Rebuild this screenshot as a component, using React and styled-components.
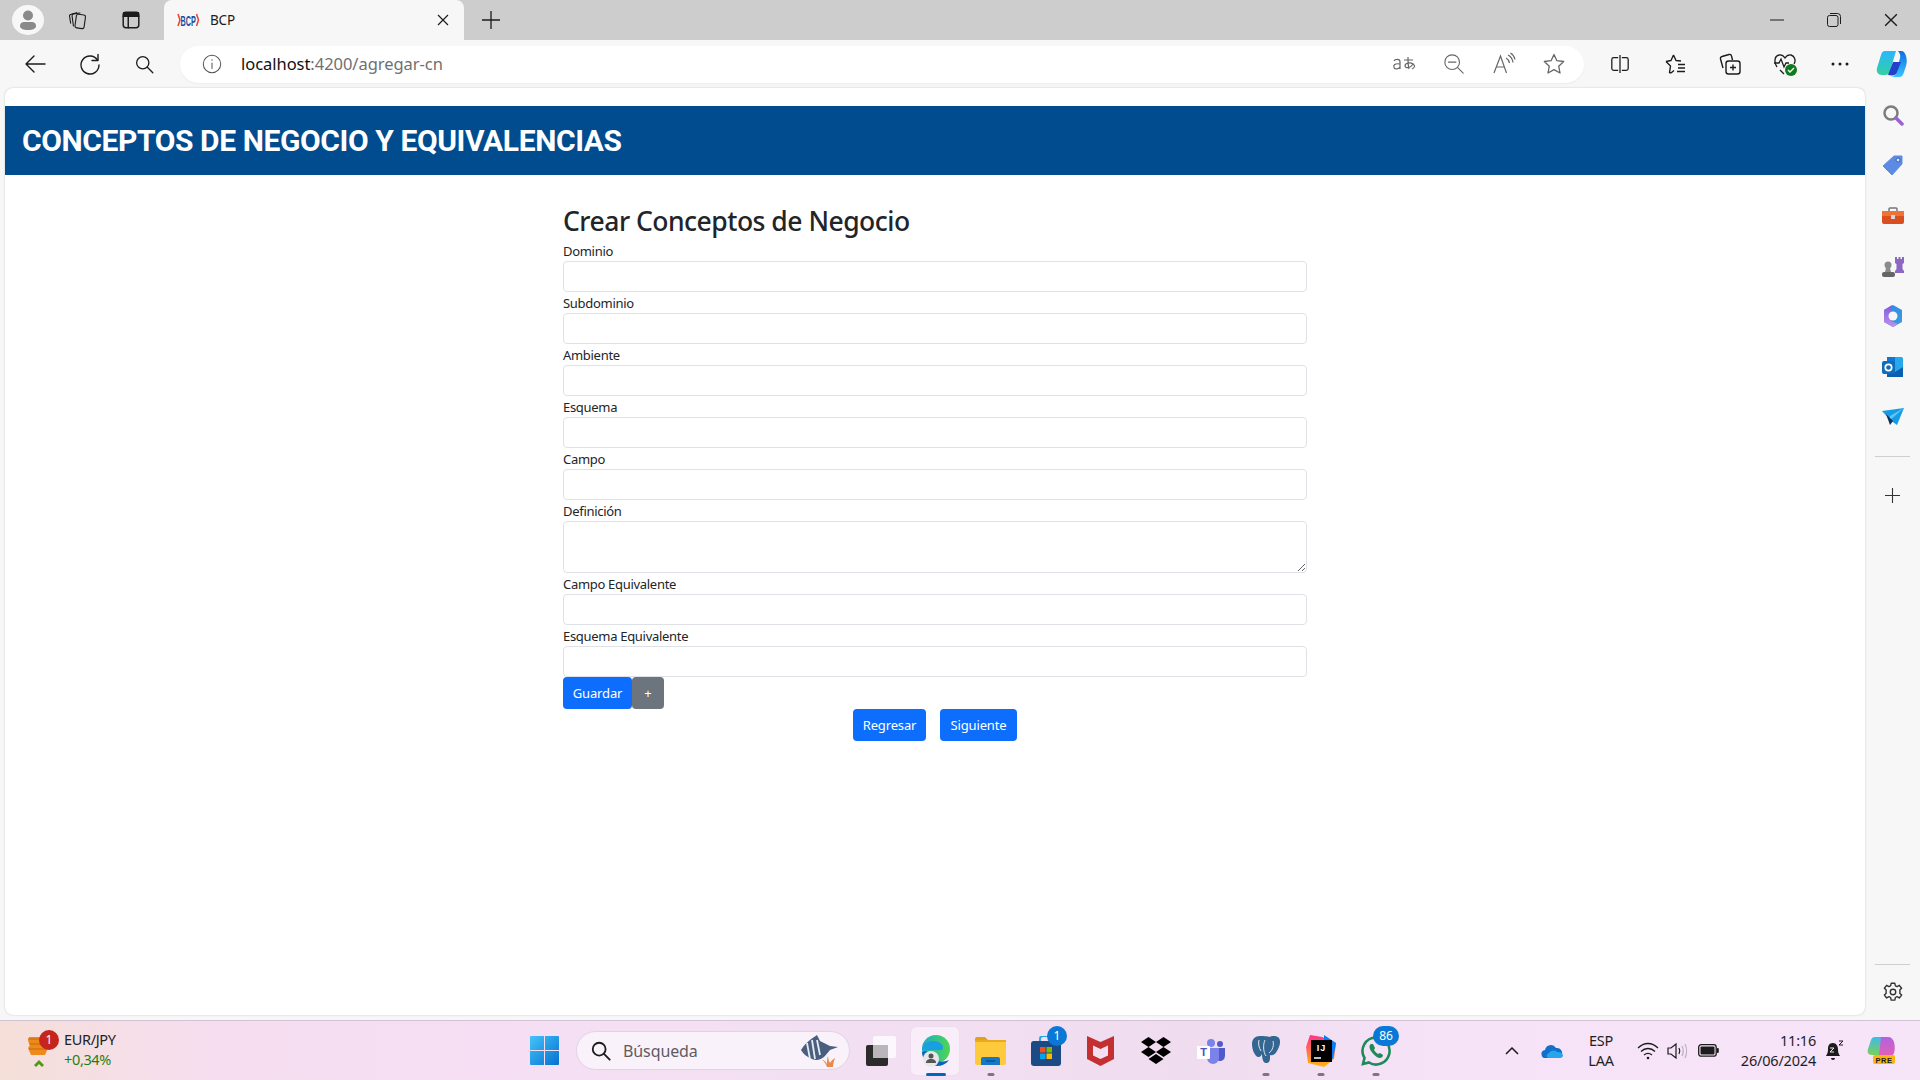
import React from "react";
import styled, { createGlobalStyle } from "styled-components";

const Global = createGlobalStyle`
  html, body { margin: 0; padding: 0; height: 1080px; overflow: hidden; background: #f7f7f7; }
  * { box-sizing: border-box; }
  body { font-family: "Noto Sans", "Open Sans", sans-serif; color: #212529; }
`;

const Shell = styled.div`display:flex;flex-direction:column;width:1920px;height:1080px;`;
const TabStrip = styled.div`display:flex;align-items:center;height:40px;background:#cdcdcd;padding-left:0;`;
const Slot = styled.div`
  flex:none;display:flex;align-items:center;justify-content:center;position:relative;
  width:${p=>p.$w||40}px;height:${p=>p.$h||40}px;margin-left:${p=>p.$ml||0}px;
`;
const ProfileDisc = styled.div`width:32px;height:30px;border-radius:50%;background:#f7f7f7;display:flex;align-items:center;justify-content:center;`;
const Tab = styled.div`
  flex:none;width:300px;height:40px;margin-left:9px;background:#f7f7f7;border-radius:8px 8px 0 0;
  display:flex;align-items:center;padding:0 15px 0 12px;font-size:13.5px;color:#1c1c1c;
`;
const TabTitle = styled.span`margin-left:10px;flex:1;letter-spacing:-.2px;`;
const WindowControls = styled.div`display:flex;margin-left:auto;margin-right:1px;`;
const Toolbar = styled.div`display:flex;align-items:center;height:48px;background:#f7f7f7;padding-left:7px;`;
const AddressBar = styled.div`
  flex:none;width:1404px;height:37px;margin-left:8px;background:#fff;border-radius:19px;
  display:flex;align-items:center;padding-left:21px;padding-right:5px;box-shadow:0 1px 2px rgba(0,0,0,.05);
`;
const Url = styled.div`margin:0 0 2px 18px;flex:1;font-size:16.5px;letter-spacing:-.04px;color:#111;`;
const UrlRest = styled.span`color:#707070;`;
const Middle = styled.div`flex:1;display:flex;min-height:0;`;
const Page = styled.main`
  flex:none;width:1860px;margin:0 0 5px 5px;background:#fff;border-radius:8px;padding-top:18px;
  box-shadow:0 0 2px rgba(0,0,0,.22);
`;
const Banner = styled.header`height:69px;background:#004c8f;display:flex;align-items:center;padding:1px 0 0 17px;`;
const BannerTitle = styled.h1`margin:0;font:700 30px/1 Roboto,sans-serif;letter-spacing:-.4px;color:#fff;`;
const Form = styled.form`width:744px;margin:29px auto 0;display:flex;flex-direction:column;`;
const FormTitle = styled.h3`margin:0;padding-bottom:2px;font-size:26.5px;line-height:34px;font-weight:500;letter-spacing:-.5px;color:#212529;`;
const Label = styled.label`display:block;height:21px;font-size:13px;line-height:${p=>p.$lh||23}px;letter-spacing:-.3px;color:#212529;`;
const TextInput = styled.input`display:block;width:100%;height:31px;border:1px solid #dee2e6;border-radius:4px;background:#fff;padding:0;margin:0;outline:none;`;
const TextArea = styled.textarea`display:block;width:100%;height:52px;border:1px solid #dee2e6;border-radius:4px;background:#fff;padding:0;margin:0;outline:none;resize:vertical;`;
const Button = styled.button`
  height:32px;border:0;border-radius:4px;color:#fff;font:400 13px/1 "Noto Sans",sans-serif;letter-spacing:-.15px;padding:0;
  width:${p=>p.$w}px;background:${p=>p.$gray?"#6c757d":"#0d6efd"};
`;
const Actions = styled.div`display:flex;`;
const Nav = styled.div`display:flex;justify-content:center;gap:14px;`;
const SideBar = styled.aside`flex:1;display:flex;flex-direction:column;align-items:center;padding:2px 0 3px 0;`;
const SideIcon = styled.div`width:50px;height:50.3px;display:flex;align-items:center;justify-content:center;flex:none;`;
const SideRule = styled.div`width:35px;height:1px;background:#cfcfcf;flex:none;margin:${p=>p.$m||"14px 0 13px"};`;
const Spacer = styled.div`flex:1;`;
const Taskbar = styled.footer`
  height:60px;flex:none;border-top:1px solid #d3c2d4;display:flex;align-items:center;position:relative;
  background:linear-gradient(90deg,#f5dfd8 0%,#f6def0 11%,#f5dff4 30%,#f2dff1 50%,#efdcee 62%,#f6e3f8 75%,#f6e4f9 100%);
`;
const Widget = styled.div`flex:none;width:530px;height:100%;display:flex;align-items:center;padding-left:20px;`;
const Coin = styled.div`position:relative;width:44px;height:44px;flex:none;padding-left:6px;`;
const RedBadge = styled.span`position:absolute;left:19px;top:1px;width:20px;height:20px;border-radius:50%;background:#c4261d;color:#fff;font-size:12px;line-height:20px;text-align:center;`;
const WidgetText = styled.div`font-size:14.5px;line-height:20px;letter-spacing:-.35px;color:#222;margin-bottom:4px;`;
const Up = styled.div`color:#1f7f12;`;
const Search = styled.div`
  flex:none;width:274px;height:39px;border-radius:20px;margin-left:17px;background:#f9f2fa;border:1px solid #e2d3e3;
  display:flex;align-items:center;padding-left:13px;padding-right:8px;color:#5f5a60;font-size:16px;letter-spacing:-.1px;
`;
const SearchLabel = styled.span`margin-left:11px;flex:1;`;
const Tile = styled.div`
  flex:none;position:relative;width:55px;height:48px;display:flex;align-items:center;justify-content:center;
  margin-left:${p=>p.$ml||0}px;
  & > svg { position:relative;z-index:1; }
`;
const ActiveBg = styled.div`position:absolute;left:3px;right:4px;top:0;bottom:0;background:#f8edf9;border-radius:5px;box-shadow:0 0 1px rgba(0,0,0,.1);`;
const Dot = styled.span`position:absolute;z-index:2;bottom:-1px;left:50%;transform:translateX(-50%);height:3px;border-radius:2px;width:${p=>p.$on?20:7}px;background:${p=>p.$on?"#0067c0":"#7d7680"};`;
const Count = styled.span`position:absolute;z-index:2;top:-1px;left:${p=>p.$l||29}px;min-width:${p=>p.$s||20}px;height:20px;border-radius:10px;background:#0a78d4;color:#fff;font-size:12px;line-height:20px;text-align:center;`;
const Tray = styled.div`display:flex;align-items:center;margin-left:auto;margin-right:18px;height:100%;color:#1f1f1f;`;
const TrayText = styled.div`font-size:14.5px;line-height:20px;letter-spacing:-.2px;text-align:${p=>p.$a||"center"};width:${p=>p.$w}px;margin:0 0 2px ${p=>p.$ml||0}px;flex:none;`;

const S = ({ children, s = 20, vb = "0 0 24 24", sw = 1.5, c = "#1c1c1c" }) => (
  <svg width={s} height={s} viewBox={vb} fill="none" stroke={c} strokeWidth={sw} strokeLinecap="round" strokeLinejoin="round">{children}</svg>
);
const G = ({ id, a, b, x2 = 1, y2 = 1 }) => (
  <linearGradient id={id} x1="0" y1="0" x2={x2} y2={y2}><stop offset="0" stopColor={a} /><stop offset="1" stopColor={b} /></linearGradient>
);

const Person = () => (<svg width="18" height="22" viewBox="0 0 18 22"><circle cx="9" cy="6.500" r="5" fill="#8a8a8a"/><path d="M1 17c0-3 2-4 4-4h8c2 0 4 1 4 4 0 2.500-3 4-8 4s-8-1.500-8-4z" fill="#8a8a8a"/></svg>);
const Collections = () => (<S s={22} sw={1.2}><rect x="9.500" y="6" width="10" height="15" rx="2" transform="rotate(8 14 13)"/><path d="M7 18.500 5.500 7.500a2 2 0 0 1 1.700-2.200l7-1"/><path d="M4 15.500 2.800 8a2 2 0 0 1 1.700-2.300l6-1.700"/></S>);
const VTabs = () => (<S s={22} sw={1.6}><rect x="3.500" y="3.500" width="17" height="17" rx="3"/><path d="M3.500 8h17M9 8v12.500"/><path d="M4 4h16v4H4z" fill="#1c1c1c"/></S>);
const BcpFav = () => (<svg width="24" height="18" viewBox="0 0 24 18"><path d="M2 3 4 9l-2 6" stroke="#e8412e" strokeWidth="1.500" fill="none"/><path d="M20.500 3l2 6-2 6" stroke="#e8412e" strokeWidth="1.500" fill="none"/><text transform="translate(12.200 14.500) scale(.52 1)" textAnchor="middle" fontFamily="Liberation Sans" fontWeight="700" fontSize="14" fill="#1d4f9c">BCP</text></svg>);
const CloseX = ({ s = 12 }) => (<svg width={s} height={s} viewBox="0 0 12 12" stroke="#1c1c1c" strokeWidth="1.200"><path d="M1 1l10 10M11 1 1 11"/></svg>);
const Plus = ({ s = 18, c="#1c1c1c" }) => (<svg width={s} height={s} viewBox="0 0 18 18" stroke={c} strokeWidth="1.300"><path d="M9 0v18M0 9h18"/></svg>);
const Minimize = () => (<svg width="14" height="2" stroke="#1c1c1c"><path d="M0 1h14"/></svg>);
const Restore = () => (<svg width="14" height="14" viewBox="0 0 14 14" fill="none" stroke="#1c1c1c"><rect x=".5" y="2.500" width="10.500" height="11" rx="2"/><path d="M3 .5h7.500a3 3 0 0 1 3 3V11"/></svg>);
const Back = () => (<S s={24} sw={1.4}><path d="M3 12h19M3 12l8-8M3 12l8 8"/></S>);
const Refresh = () => (<S s={24} sw={1.4}><path d="M19.500 8a9 9 0 1 0 1.500 5"/><path d="M20 2.500V8.500h-6"/></S>);
const Glass = ({ s = 21, c = "#1c1c1c", sw = 1.5 }) => (<S s={s} sw={sw} c={c}><circle cx="10" cy="10" r="7"/><path d="m15.500 15.500 6 6"/></S>);
const Info = () => (<S s={22} sw={1.1} c="#555"><circle cx="12" cy="12" r="9.500"/><path d="M12 11v6M12 7.200v.6"/></S>);
const Translate = () => (<svg width="24" height="20" viewBox="0 0 24 20" fill="none" stroke="#666" strokeWidth="1.200"><path d="M2 7c1-2 6-2.500 6 1v7M8 10c-5-1-7 1-6 3.500S7 15 8 13"/><path d="M12 6h9M16 3c0 6 0 9 1 12M21 9c-1 5-8 6-8 3s5-4 8-2 1 4-1 5"/></svg>);
const ZoomOut = () => (<S s={22} sw={1.2} c="#666"><circle cx="10" cy="10" r="8"/><path d="M6 10h8M16 16l6 6"/></S>);
const ReadAloud = () => (<svg width="24" height="24" viewBox="0 0 24 24" fill="none" stroke="#666" strokeWidth="1.200"><path d="M2 21 8.500 4l6 17M4.500 15h8"/><path d="M14 6c2 1 3 3 3.500 5M16 3c3 1.500 4.500 4 5 7.500M18.500 1c2.500 1.500 4 4 4.500 6.500"/></svg>);
const Star = ({ c = "#666", s = 24, sw = 1.3 }) => (<S s={s} c={c} sw={sw}><path d="M12 2.500l2.900 6.200 6.800.8-5 4.700 1.300 6.800-6-3.400-6 3.400 1.300-6.800-5-4.700 6.800-.8z"/></S>);
const Split = () => (<svg width="20" height="22" viewBox="0 0 22 22" fill="none" stroke="#1c1c1c" strokeWidth="1.400"><path d="M9 4H4a2 2 0 0 0-2 2v10a2 2 0 0 0 2 2h5M13 4h5a2 2 0 0 1 2 2v10a2 2 0 0 1-2 2h-5M11 1v20"/></svg>);
const Favs = () => (<svg width="24" height="24" viewBox="0 0 24 24" fill="none" stroke="#1c1c1c" strokeWidth="1.400" strokeLinejoin="round"><path d="M10.500 3l2.500 5.500 5 .5M8 21l3-2.500M3 9.500 7.500 14 6.500 20.500 8 21M10.500 3 8 8.500 3 9.500"/><path d="M15 12.500h7M15 16h7M14 19.500h8"/></svg>);
const CollAdd = () => (<svg width="24" height="24" viewBox="0 0 24 24" fill="none" stroke="#1c1c1c" strokeWidth="1.400" strokeLinejoin="round"><rect x="8" y="9" width="14" height="13" rx="2.500"/><path d="M15 12.500v6M12 15.500h6"/><path d="M5 16 2.500 7a2 2 0 0 1 1.500-2.500L11 2.500a2 2 0 0 1 2.500 1.500l1 4"/></svg>);
const Health = () => (<svg width="26" height="26" viewBox="0 0 26 26"><path d="M5 16C2 12 2 5 7 4c3-.5 5 1.500 6 3 1-1.500 3-3.500 6-3 4 1 5 6 3 9M2 12h5l2-4 3 8 2-4h3M8 19l4 4" fill="none" stroke="#1c1c1c" strokeWidth="1.300"/><circle cx="19" cy="19" r="6" fill="#0d7a1b"/><path d="M16 19l2 2 4-4" stroke="#fff" fill="none" strokeWidth="1.400"/></svg>);
const More = () => (<svg width="18" height="4" fill="#1c1c1c"><circle cx="2" cy="2" r="1.500"/><circle cx="9" cy="2" r="1.500"/><circle cx="16" cy="2" r="1.500"/></svg>);
const Copilot = ({ id, s = 32 }) => (<svg width={s} height={s} viewBox="0 0 32 32"><defs><G id={id+"a"} a="#2ab6ff" b="#33d0a0" x2="0"/><G id={id+"b"} a="#0f6cdf" b="#38c4ff" x2="0"/></defs><path d="M9 3h11l-6 20c-.7 2.500-2 4-5 4H6C2 27 0 24 1 20L5 7c.7-2.500 2-4 4-4z" fill={`url(#${id}a)`}/><path d="M13 29c4 0 6-1 7-4l4-15c.5-2 .500-4-2-7h3c3 0 4 2 5 5 1 3 1 7 0 10l-2 6c-1 3-2 5-5 5z" fill={`url(#${id}b)`}/><path d="M12 27l5-13h8l-4 10c-1 3-3 4-9 3z" fill="#2340c8"/></svg>);
const Side = {
  Search: () => (<svg width="22" height="22" viewBox="0 0 22 22"><circle cx="9" cy="9" r="6.500" fill="none" stroke="#7d7d7d" strokeWidth="2.500"/><path d="m14 14 6 6" stroke="#9b62d0" strokeWidth="3.500" strokeLinecap="round"/></svg>),
  Tag: () => (<svg width="22" height="22" viewBox="0 0 22 22"><path d="M12 2h8v8L10 21 1 12z" fill="#5b8be3" strokeLinejoin="round" stroke="#5b8be3"/><circle cx="16" cy="6" r="2" fill="#dbe6fb" stroke="#3a5bb0"/></svg>),
  Tool: () => (<svg width="24" height="20" viewBox="0 0 24 20"><path d="M8 6V3a1 1 0 0 1 1-1h6a1 1 0 0 1 1 1v3" fill="none" stroke="#777" strokeWidth="1.500"/><rect x="1" y="5" width="22" height="13" rx="2" fill="#d94f22"/><rect x="1" y="5" width="22" height="5" fill="#ee7335"/><rect x="10" y="9" width="4" height="4" fill="#d7d7d7"/></svg>),
  Chess: () => (<svg width="24" height="24" viewBox="0 0 24 24"><path d="M14 3h2v2h1.500V3h2v2H21V3h2v6l-1.500 1v5l1.500 2v2h-9v-2l1.500-2v-5L14 9z" fill="#8a68c3"/><circle cx="7" cy="11" r="3.500" fill="#8b8b8b"/><path d="M5 14h4l1 4H4z" fill="#8b8b8b"/><rect x="1" y="18" width="13" height="5" rx="2" fill="#666"/></svg>),
  M365: () => (<svg width="22" height="24" viewBox="0 0 22 24"><defs><G id="m3a" a="#2f86e6" b="#3f9ce0"/><G id="m3b" a="#7a5fd8" b="#c091ec" x2="0"/></defs><path d="M11 1l9 5v12l-9 5-9-5V6z" fill="url(#m3a)"/><path d="M2 6v12l9 5 5-3-7-3V7l1-6z" fill="url(#m3b)"/><circle cx="11" cy="12" r="4.500" fill="#f7f7f7"/></svg>),
  Outlook: () => (<svg width="22" height="22" viewBox="0 0 22 22"><rect x="5" y="1" width="16" height="20" rx="1.500" fill="#28a8ea"/><rect x="5" y="1" width="8" height="8" fill="#0f78d4"/><path d="M5 11l8 5 8-5v10H5z" fill="#0a5fb0"/><rect x="0" y="5" width="13" height="13" rx="2" fill="#0f6cbd"/><circle cx="6.500" cy="11.500" r="3.200" fill="none" stroke="#fff" strokeWidth="1.700"/></svg>),
  Send: () => (<svg width="22" height="18" viewBox="0 0 22 18"><path d="M0 3l22-3-7 17-7-5z" fill="#169ce6"/><path d="M8 12l14-12-14 8z" fill="#5ccbf5"/><path d="M4 6l4 11 3-4z" fill="#12305e"/></svg>),
};
const Gear = () => (<svg width="22" height="22" viewBox="0 0 24 24" fill="none" stroke="#333" strokeWidth="1.500" strokeLinejoin="round"><circle cx="12" cy="12" r="3"/><path d="M10 2.500h4l.6 2.800 1.800.8 2.500-1.400 2.500 3.200-2 2 .2 2-.2 1.400 2 2-2.500 3.200-2.500-1.400-1.800.9-.6 2.800h-4l-.6-2.800-1.800-.9-2.500 1.400-2.500-3.200 2-2-.2-1.400.2-2-2-2 2.500-3.200 2.500 1.400 1.800-.8z"/></svg>);

const Coins = () => (<svg width="26" height="42" viewBox="0 0 26 42"><path d="M3 8h18l2 4-2 3 1 4-3 7H5l-3-7 2-3-2-4z" fill="#ee8a1b"/><path d="M2 10h20M3 15h19M3 20h19" stroke="#c96a0a" fill="none"/><path d="M13 31l-5 5 2 2 3-3 3 3 2-2z" fill="#4d9b12" /></svg>);
const WinLogo = () => (<svg width="29" height="29" viewBox="0 0 29 29"><defs><G id="wl" a="#43c4fb" b="#0670cf"/></defs><path d="M0 1a1 1 0 0 1 1-1h13v14H0zM15 0h13a1 1 0 0 1 1 1v13H15zM0 15h14v14H1a1 1 0 0 1-1-1zM15 15h14v13a1 1 0 0 1-1 1H15z" fill="url(#wl)"/></svg>);
const Fish = () => (<svg width="44" height="34" viewBox="0 0 44 34"><path d="M4 16C10 6 18 3 20 1c1 2 2 4 3 6l10 5 8 1-8 3-5 6c-4 4-9 5-13 3C10 23 6 20 4 16z" fill="#4a5f80"/><path d="M10 9l3 16M15 6l3 19M20 6l3 15" stroke="#e7ecf3" strokeWidth="1.800"/><path d="M30 33c-1-3-3-6-5-7 2 0 4 2 5 4 0-3 0-6 1-8 0 3 1 5 2 7 1-2 3-4 5-5-1 3-2 6-2 9z" fill="#ea8a4a"/></svg>);
const TaskView = () => (<svg width="30" height="30" viewBox="0 0 30 30"><rect x="0" y="9" width="22" height="21" rx="2" fill="#2b2b2b"/><rect x="7" y="0" width="23" height="22" rx="2" fill="#fff" fillOpacity=".75"/><rect x="7" y="9" width="15" height="13" fill="#b9b6ba"/></svg>);
const Edge = () => (<svg width="32" height="32" viewBox="0 0 32 32"><defs><G id="eg" a="#18b0c6" b="#4fd64f" y2="0"/></defs><circle cx="16" cy="14" r="14" fill="url(#eg)"/><path d="M2 14C4 6 14 4 20 8c3 2 4 5 2 7H9c-4 0-6-1-7-1z" fill="#1b9de2"/><path d="M2 17c0 8 7 14 15 14 5 0 9-2 12-6-7 3-15 2-17-4-1-3-6-6-10-4z" fill="#0e63b9"/><circle cx="11" cy="24" r="8" fill="#e8e6e8"/><circle cx="11" cy="21" r="2.500" fill="#555"/><path d="M6 28c0-3 2-4 5-4s5 1 5 4z" fill="#555"/></svg>);
const Folder = () => (<svg width="31" height="28" viewBox="0 0 31 28"><path d="M0 2a2 2 0 0 1 2-2h8l3 3h-13z" fill="#e0a21a"/><path d="M0 3h29a2 2 0 0 1 2 2v21a2 2 0 0 1-2 2H2a2 2 0 0 1-2-2z" fill="#ffc93c"/><path d="M0 3h31v2H0z" fill="#e8aa1f"/><path d="M6 28v-6a2 2 0 0 1 2-2h15a2 2 0 0 1 2 2v6z" fill="#1577c5"/><path d="M11 24h9" stroke="#0b4f91" strokeWidth="1.400"/></svg>);
const Store = () => (<svg width="30" height="30" viewBox="0 0 30 30"><path d="M9 6V3a3 3 0 0 1 3-3h6a3 3 0 0 1 3 3v3" fill="none" stroke="#2aa7e0" strokeWidth="2"/><rect x="0" y="5" width="30" height="25" rx="3" fill="#1c4a85"/><rect x="9" y="11" width="5.500" height="5.500" fill="#f25022"/><rect x="15.500" y="11" width="5.500" height="5.500" fill="#7fba00"/><rect x="9" y="17.500" width="5.500" height="5.500" fill="#00a4ef"/><rect x="15.500" y="17.500" width="5.500" height="5.500" fill="#ffb900"/></svg>);
const McAfee = () => (<svg width="27" height="30" viewBox="0 0 27 30"><path d="M0 0l13.500 6L27 0v23l-13.500 7L0 23z" fill="#c42f31"/><path d="M6 9.500l7.500 3.500L21 9.500V19.500L13.500 23 6 19.500z" fill="#f2dff1"/></svg>);
const Dropbox = () => (<svg width="30" height="27" viewBox="0 0 30 27" fill="#000"><path d="M7.500 0 15 5 7.500 10 0 5zM22.500 0 30 5l-7.500 5L15 5zM7.500 10 15 15l-7.500 5L0 15zM22.500 10 30 15l-7.500 5L15 15zM7.500 22l7.500-5 7.500 5-7.500 5z"/></svg>);
const Teams = () => (<svg width="28" height="26" viewBox="0 0 28 26"><circle cx="14" cy="5" r="4" fill="#7b83eb"/><circle cx="23" cy="6" r="3" fill="#5059c9"/><path d="M19 10h9v8a5 5 0 0 1-8 4z" fill="#5059c9"/><path d="M8 10h14v10a6 6 0 0 1-12 0z" fill="#7b83eb"/><rect x="0" y="8" width="13" height="13" rx="1" fill="#fff"/><text x="6.500" y="18" textAnchor="middle" fontFamily="Liberation Sans" fontWeight="700" fontSize="11" fill="#4b53bc">T</text></svg>);
const Pg = () => (<svg width="28" height="30" viewBox="0 0 28 30"><path d="M8 0c-5 0-8 3-8 8 0 6 3 12 6 13 2 .5 3-1 4-3 0 4 1 9 4 9s4-2 4-5v-3c2 1 5 0 7-4 3-5 4-10 2-13-2-2-6-3-9-1-3-1-6-1-10-1z" fill="#336791"/><path d="M13 4c-2 4-2 12 1 16M21 5c1 4 0 9-4 12M7 4c-1 4 0 8 2 11" fill="none" stroke="#e9e3ec" strokeWidth="1"/></svg>);
const IJ = () => (<svg width="30" height="32" viewBox="0 0 30 32"><defs><G id="ijg" a="#ff318c" b="#fdb60d" x2="0"/></defs><path d="M4 0l12 2L30 8l-2 16-10 8L2 28 0 12z" fill="url(#ijg)"/><path d="M18 0l12 8-3 16-9-8z" fill="#087cfa"/><rect x="5" y="5" width="21" height="22" fill="#000"/><text x="15.500" y="16" textAnchor="middle" fontFamily="Liberation Sans" fontWeight="700" fontSize="9" letterSpacing="1" fill="#fff">IJ</text><path d="M8 23h7" stroke="#fff" strokeWidth="1.500"/></svg>);
const WhatsApp = () => (<svg width="30" height="30" viewBox="0 0 30 30"><path d="M15 1.500A13.500 13.500 0 0 0 3.500 22L2 28l6-1.500A13.500 13.500 0 1 0 15 1.500z" fill="none" stroke="#1e8a5a" strokeWidth="2.600"/><path d="M10 8c-2 1-2 4 0 7s5 6 8 7c2 .5 4-1 4-3l-3-2-2 1c-2-1-3-3-4-4l1-2-2-4z" fill="#1e8a5a"/></svg>);
const Chevron = () => (<svg width="14" height="8" fill="none" stroke="#1c1c1c" strokeWidth="1.500"><path d="M1 7l6-6 6 6"/></svg>);
const Cloud = () => (<svg width="22" height="14" viewBox="0 0 22 14"><path d="M5 14a4 4 0 0 1-1-8 6 6 0 0 1 11-2 5 5 0 0 1 2 10z" fill="#0f6fcb"/><path d="M8 14c-3 0-3-4 0-5 2-3 6-3 8-1 4-.5 6 2 6 3 0 2-1 3-3 3z" fill="#27a4ea"/></svg>);
const Wifi = () => (<svg width="22" height="18" viewBox="0 0 22 18" fill="none" stroke="#1c1c1c" strokeWidth="1.300"><path d="M1 6c6-6 14-6 20 0M4 9.500c4-4 10-4 14 0M7 13c2.500-2 5.500-2 8 0"/><circle cx="11" cy="16" r="1.300" fill="#1c1c1c" stroke="none"/></svg>);
const Volume = () => (<svg width="22" height="18" viewBox="0 0 22 18" fill="none" stroke="#1c1c1c" strokeWidth="1.200"><path d="M1 6v6h3l5 4V2L4 6z"/><path d="M12 6c1 2 1 4 0 6" /><path d="M15 4c1.500 3 1.500 7 0 10M18 2c2 4 2 10 0 14" stroke="#b8b0ba"/></svg>);
const Battery = () => (<svg width="21" height="13" viewBox="0 0 21 13"><rect x=".7" y=".7" width="17.500" height="11.500" rx="2.500" fill="none" stroke="#1c1c1c" strokeWidth="1.300"/><rect x="2.500" y="2.500" width="14" height="8" rx="1" fill="#1c1c1c"/><rect x="18.800" y="4" width="2" height="5" rx="1" fill="#1c1c1c"/></svg>);
const Bell = () => (<svg width="20" height="22" viewBox="0 0 20 22"><path d="M8 3c-4 0-5 3-5 6 0 4-1 5-2 7h14c-1-2-2-3-2-7 0-3-2-6-5-6z" fill="#1c1c1c"/><path d="M6 18a2 2 0 0 0 4 0z" fill="#1c1c1c"/><path d="M5 8h4l-4 4h4" stroke="#f6e4f9" fill="none" strokeWidth="1"/><path d="M14 1h4l-4 4h4" stroke="#1c1c1c" fill="none" strokeWidth="1"/></svg>);
const CopilotPre = () => (<svg width="30" height="30" viewBox="0 0 30 30"><defs><G id="cpa" a="#3dbbe8" b="#7ccf5a" x2="0"/><G id="cpb" a="#b162e0" b="#e060b8" x2="0"/></defs><path d="M8 1h9l-4 18H5c-4 0-5-3-4-6L4 4c.7-2 2-3 4-3z" fill="url(#cpa)"/><path d="M14 1h7c3 0 5 2 6 5 1 4 1 8 0 11l-1 2H12z" fill="url(#cpb)"/><rect x="6" y="19" width="22" height="9" rx="2" fill="#fbb512"/><text x="17" y="26.500" textAnchor="middle" fontFamily="Liberation Sans" fontWeight="700" fontSize="7.500" letterSpacing=".6" fill="#1c1c1c">PRE</text></svg>);

const fields = ["Dominio", "Subdominio", "Ambiente", "Esquema", "Campo"];

export default function App() {
  return (
    <Shell>
      <Global />
      <TabStrip>
        <Slot $w={32} $ml={12}><ProfileDisc><Person /></ProfileDisc></Slot>
        <Slot $w={56} $ml={6}><Collections /></Slot>
        <Slot $w={48} $ml={1}><VTabs /></Slot>
        <Tab><BcpFav /><TabTitle>BCP</TabTitle><CloseX /></Tab>
        <Slot $w={54}><Plus /></Slot>
        <WindowControls>
          <Slot $w={57}><Minimize /></Slot>
          <Slot $w={57}><Restore /></Slot>
          <Slot $w={57}><CloseX s={14} /></Slot>
        </WindowControls>
      </TabStrip>
      <Toolbar>
        <Slot $w={55} $h={48}><Back /></Slot>
        <Slot $w={55} $h={48}><Refresh /></Slot>
        <Slot $w={55} $h={48}><Glass /></Slot>
        <AddressBar>
          <Info />
          <Url>localhost<UrlRest>:4200/agregar-cn</UrlRest></Url>
          <Slot $w={50} $h={36}><Translate /></Slot>
          <Slot $w={50} $h={36}><ZoomOut /></Slot>
          <Slot $w={50} $h={36}><ReadAloud /></Slot>
          <Slot $w={50} $h={36}><Star /></Slot>
        </AddressBar>
        <Slot $w={55} $h={48} $ml={8}><Split /></Slot>
        <Slot $w={55} $h={48}><Favs /></Slot>
        <Slot $w={55} $h={48}><CollAdd /></Slot>
        <Slot $w={55} $h={48}><Health /></Slot>
        <Slot $w={55} $h={48}><More /></Slot>
        <Slot $w={50} $h={48}><Copilot id="top" /></Slot>
      </Toolbar>
      <Middle>
        <Page>
          <Banner><BannerTitle>CONCEPTOS DE NEGOCIO Y EQUIVALENCIAS</BannerTitle></Banner>
          <Form onSubmit={(e) => e.preventDefault()}>
            <FormTitle>Crear Conceptos de Negocio</FormTitle>
            {fields.map((f) => (
              <div key={f}><Label>{f}</Label><TextInput /></div>
            ))}
            <div><Label>Definición</Label><TextArea /></div>
            <div><Label $lh={22}>Campo Equivalente</Label><TextInput /></div>
            <div><Label $lh={22}>Esquema Equivalente</Label><TextInput /></div>
            <Actions>
              <Button $w={69}>Guardar</Button>
              <Button $w={32} $gray>+</Button>
            </Actions>
            <Nav>
              <Button $w={73}>Regresar</Button>
              <Button $w={77}>Siguiente</Button>
            </Nav>
          </Form>
        </Page>
        <SideBar>
          <SideIcon><Side.Search /></SideIcon>
          <SideIcon><Side.Tag /></SideIcon>
          <SideIcon><Side.Tool /></SideIcon>
          <SideIcon><Side.Chess /></SideIcon>
          <SideIcon><Side.M365 /></SideIcon>
          <SideIcon><Side.Outlook /></SideIcon>
          <SideIcon><Side.Send /></SideIcon>
          <SideRule />
          <SideIcon><Plus s={15} c="#333" /></SideIcon>
          <Spacer />
          <SideRule $m="0 0 2px" />
          <SideIcon><Gear /></SideIcon>
        </SideBar>
      </Middle>
      <Taskbar>
        <Widget>
          <Coin><Coins /><RedBadge>1</RedBadge></Coin>
          <WidgetText>EUR/JPY<Up>+0,34%</Up></WidgetText>
        </Widget>
        <WinLogo />
        <Search><Glass s={22} c="#1c1c1c" sw={2} /><SearchLabel>Búsqueda</SearchLabel><Fish /></Search>
        <Tile $ml={3}><TaskView /></Tile>
        <Tile><ActiveBg /><Edge /><Dot $on /></Tile>
        <Tile><Folder /><Dot /></Tile>
        <Tile><Store /><Count>1</Count></Tile>
        <Tile><McAfee /></Tile>
        <Tile><Dropbox /></Tile>
        <Tile><Teams /></Tile>
        <Tile><Pg /><Dot /></Tile>
        <Tile><IJ /><Dot /></Tile>
        <Tile><WhatsApp /><Count $l={25} $s={26}>86</Count><Dot /></Tile>
        <Tray>
          <Slot $w={40} $h={40}><Chevron /></Slot>
          <Slot $w={40} $h={40}><Cloud /></Slot>
          <TrayText $w={60} $ml={-1}>ESP<br />LAA</TrayText>
          <Slot $w={30} $h={40} $ml={2}><Wifi /></Slot>
          <Slot $w={30} $h={40}><Volume /></Slot>
          <Slot $w={30} $h={40}><Battery /></Slot>
          <TrayText $w={85} $a="right" $ml={8}>11:16<br />26/06/2024</TrayText>
          <Slot $w={38} $h={40}><Bell /></Slot>
          <Slot $w={40} $h={40} $ml={8}><CopilotPre /></Slot>
        </Tray>
      </Taskbar>
    </Shell>
  );
}
